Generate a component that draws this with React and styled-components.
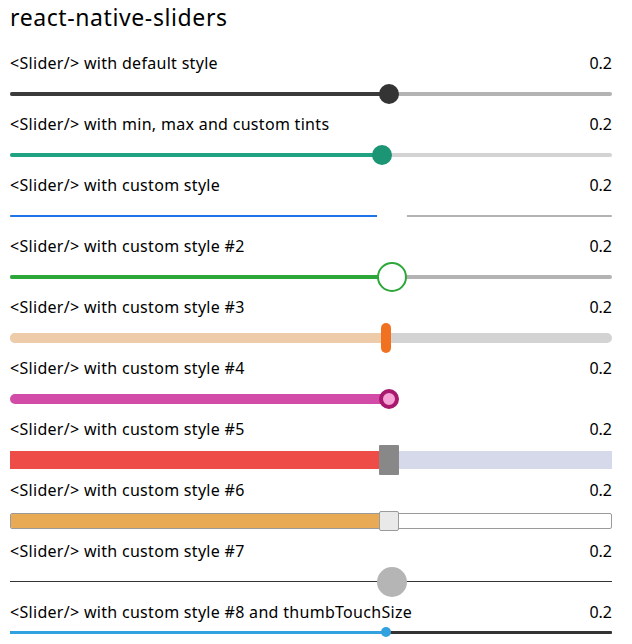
import React from 'react';
import styled, { createGlobalStyle } from 'styled-components';

const GlobalStyle = createGlobalStyle`
    html, body {
        margin: 0;
        padding: 0;
        background: #fff;
    }
    body {
        font-family: "Noto Sans", "Open Sans", sans-serif;
        color: #000;
    }
`;

const Page = styled.div`
    width: 632px;
    padding: 0 20px 0 10px;
    box-sizing: border-box;
`;

const Title = styled.h1`
    margin: 0;
    padding: 4px 0 23px;
    font-size: 23px;
    line-height: 26px;
    font-weight: normal;
    letter-spacing: 0.6px;
`;

const Row = styled.div`
    display: flex;
    flex-direction: column;
`;

const Header = styled.div`
    display: flex;
    justify-content: space-between;
    align-items: center;
    height: 20px;
    font-size: 16px;
    line-height: 20px;
    letter-spacing: 0.3px;

    span:last-child {
        letter-spacing: 0;
    }
`;

const SliderBox = styled.div`
    position: relative;
    height: ${p => p.$height || 41}px;
    display: flex;
    flex-direction: column;
    justify-content: center;
`;

const Track = styled.div`
    position: relative;
    height: ${p => p.$h}px;
    border-radius: ${p => p.$r || 0}px;
    background: ${p => p.$max};
    border: ${p => (p.$border ? `1px solid ${p.$border}` : 'none')};
    overflow: hidden;
`;

const Fill = styled.div`
    position: absolute;
    left: 0;
    top: 0;
    bottom: 0;
    background: ${p => p.$min};
`;

const Thumb = styled.div`
    position: absolute;
    top: 50%;
    box-sizing: border-box;
    width: ${p => p.$w}px;
    height: ${p => p.$h}px;
    margin-left: ${p => -p.$w / 2}px;
    margin-top: ${p => -p.$h / 2}px;
    border-radius: ${p => p.$r}px;
    background: ${p => p.$bg};
    border: ${p => (p.$border ? p.$border : 'none')};
`;

const sliders = [
    {
        label: '<Slider/> with default style',
        at: 379,
        track: { h: 4, r: 2, min: '#3b3b3b', max: '#b3b3b3' },
        thumb: { w: 20, h: 20, r: 10, bg: '#343434' },
    },
    {
        label: '<Slider/> with min, max and custom tints',
        at: 372,
        track: { h: 4, r: 2, min: '#1fa383', max: '#d3d3d3' },
        thumb: { w: 20, h: 20, r: 10, bg: '#1b9574' },
    },
    {
        label: '<Slider/> with custom style',
        at: 382,
        track: { h: 2, r: 1, min: '#1f74e9', max: '#b3b3b3' },
        thumb: { w: 30, h: 30, r: 15, bg: '#fff' },
    },
    {
        label: '<Slider/> with custom style #2',
        at: 382,
        track: { h: 4, r: 2, min: '#2ea73a', max: '#b3b3b3' },
        thumb: { w: 30, h: 30, r: 15, bg: '#fff', border: '2px solid #2ea73a' },
    },
    {
        label: '<Slider/> with custom style #3',
        at: 376,
        track: { h: 10, r: 5, min: '#efcca9', max: '#d3d3d3' },
        thumb: { w: 10, h: 30, r: 5, bg: '#f07220' },
    },
    {
        label: '<Slider/> with custom style #4',
        at: 379,
        track: { h: 10, r: 5, min: '#d24ca7', max: 'transparent' },
        thumb: { w: 20, h: 20, r: 10, bg: '#f7a2d6', border: '4px solid #a8186f' },
    },
    {
        label: '<Slider/> with custom style #5',
        at: 379,
        track: { h: 18, r: 0, min: '#ee4d47', max: '#d6d9ea' },
        thumb: { w: 20, h: 30, r: 1, bg: '#888888' },
    },
    {
        label: '<Slider/> with custom style #6',
        at: 379,
        track: { h: 14, r: 2, min: '#e8aa55', max: '#fff', border: '#9a9a9a' },
        thumb: { w: 20, h: 20, r: 2, bg: '#e9e9e9', border: '1px solid #9a9a9a' },
    },
    {
        label: '<Slider/> with custom style #7',
        at: 382,
        track: { h: 1, r: 0, min: '#333', max: '#333' },
        thumb: { w: 30, h: 30, r: 15, bg: '#b5b5b5' },
    },
    {
        label: '<Slider/> with custom style #8 and thumbTouchSize',
        at: 376,
        height: 20,
        track: { h: 3, r: 1, min: '#31a1df', max: '#333' },
        thumb: { w: 10, h: 10, r: 5, bg: '#31a1df' },
    },
];

function Slider({ at, track, thumb, height }) {
    return (
        <SliderBox $height={height}>
            <Track $h={track.h} $r={track.r} $max={track.max} $border={track.border}>
                <Fill $min={track.min} style={{ width: at }} />
            </Track>
            <Thumb
                $w={thumb.w}
                $h={thumb.h}
                $r={thumb.r}
                $bg={thumb.bg}
                $border={thumb.border}
                style={{ left: at }}
            />
        </SliderBox>
    );
}

export default function App() {
    return (
        <Page>
            <GlobalStyle />
            <Title>react-native-sliders</Title>
            {sliders.map(s => (
                <Row key={s.label}>
                    <Header>
                        <span>{s.label}</span>
                        <span>0.2</span>
                    </Header>
                    <Slider at={s.at} track={s.track} thumb={s.thumb} height={s.height} />
                </Row>
            ))}
        </Page>
    );
}
